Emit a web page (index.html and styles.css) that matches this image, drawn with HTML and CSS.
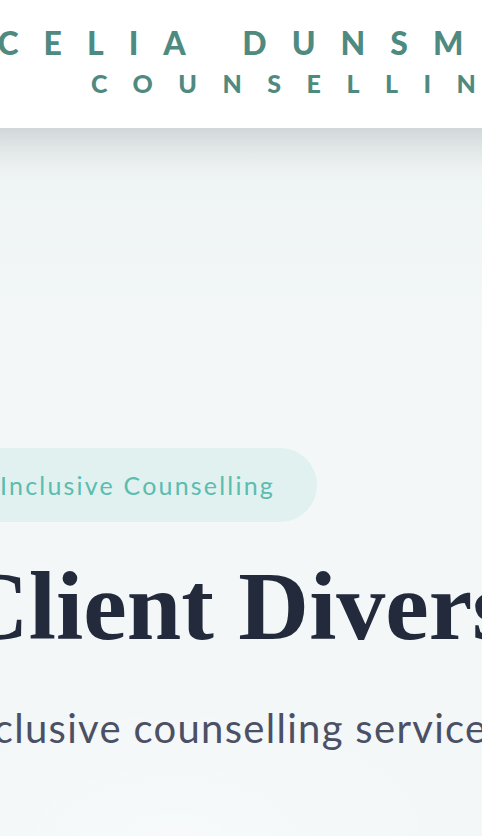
FILE: index.html
```html
<!DOCTYPE html>
<html lang="en">
<head>
<meta charset="utf-8">
<title>Celia Dunsmore Counselling</title>
<link rel="stylesheet" href="styles.css">
</head>
<body>
<div class="site">
  <header class="site-header">
    <a class="logo" href="#">
      <span class="logo-name">CELIA DUNSMORE</span>
      <span class="logo-sub">COUNSELLING</span>
    </a>
  </header>
  <section class="hero">
    <span class="badge">Inclusive Counselling</span>
    <h1 class="hero-title">Client Diversity</h1>
    <p class="hero-text">Inclusive counselling services for everyone</p>
  </section>
</div>
</body>
</html>
```
FILE: styles.css
```css
html, body {
  margin: 0;
  padding: 0;
}
body {
  overflow: hidden;
  background: #f3f7f8;
  font-family: "Lato", "Liberation Sans", sans-serif;
}
.site {
  width: 720px;
  margin-left: -42px;
}
.site-header {
  position: relative;
  z-index: 2;
  height: 128px;
  box-sizing: border-box;
  padding-top: 27px;
  background: #ffffff;
  box-shadow: 0 12px 40px rgba(20, 40, 40, 0.18);
  display: flex;
  justify-content: center;
}
.logo {
  display: flex;
  flex-direction: column;
  align-items: center;
  text-decoration: none;
  color: #4f8a81;
  font-family: "Lato", "Liberation Sans", sans-serif;
  font-weight: 900;
  white-space: nowrap;
}
.logo-name {
  font-size: 32px;
  line-height: 32px;
  letter-spacing: 25px;
  margin-bottom: 12px;
  padding-right: 10px;
}
.logo-sub {
  font-size: 25px;
  line-height: 25px;
  letter-spacing: 25.5px;
}
.hero {
  min-height: 708px;
  box-sizing: border-box;
  padding-top: 320px;
  background:
    radial-gradient(ellipse 60% 30% at 30% 100%, rgba(255,255,255,0.35), rgba(255,255,255,0) 70%),
    linear-gradient(180deg, #eef3f4 0%, #f3f7f8 30%, #f3f7f8 100%);
  display: flex;
  flex-direction: column;
  align-items: flex-start;
  white-space: nowrap;
}
.badge {
  display: inline-flex;
  align-items: center;
  height: 74px;
  padding: 0 42px;
  border-radius: 37px;
  background: #e1f1ef;
  color: #5bbcb0;
  font-size: 25px;
  line-height: 30px;
  letter-spacing: 2.2px;
}
.hero-title {
  margin: 31px 0 0;
  font-family: "Liberation Serif", "Times New Roman", serif;
  font-weight: 700;
  font-size: 98px;
  line-height: 1.1;
  color: #232a3b;
}
.hero-text {
  margin: 37px 0 0;
  font-size: 40px;
  line-height: 60px;
  letter-spacing: 1.3px;
  color: #4b5064;
}
```
